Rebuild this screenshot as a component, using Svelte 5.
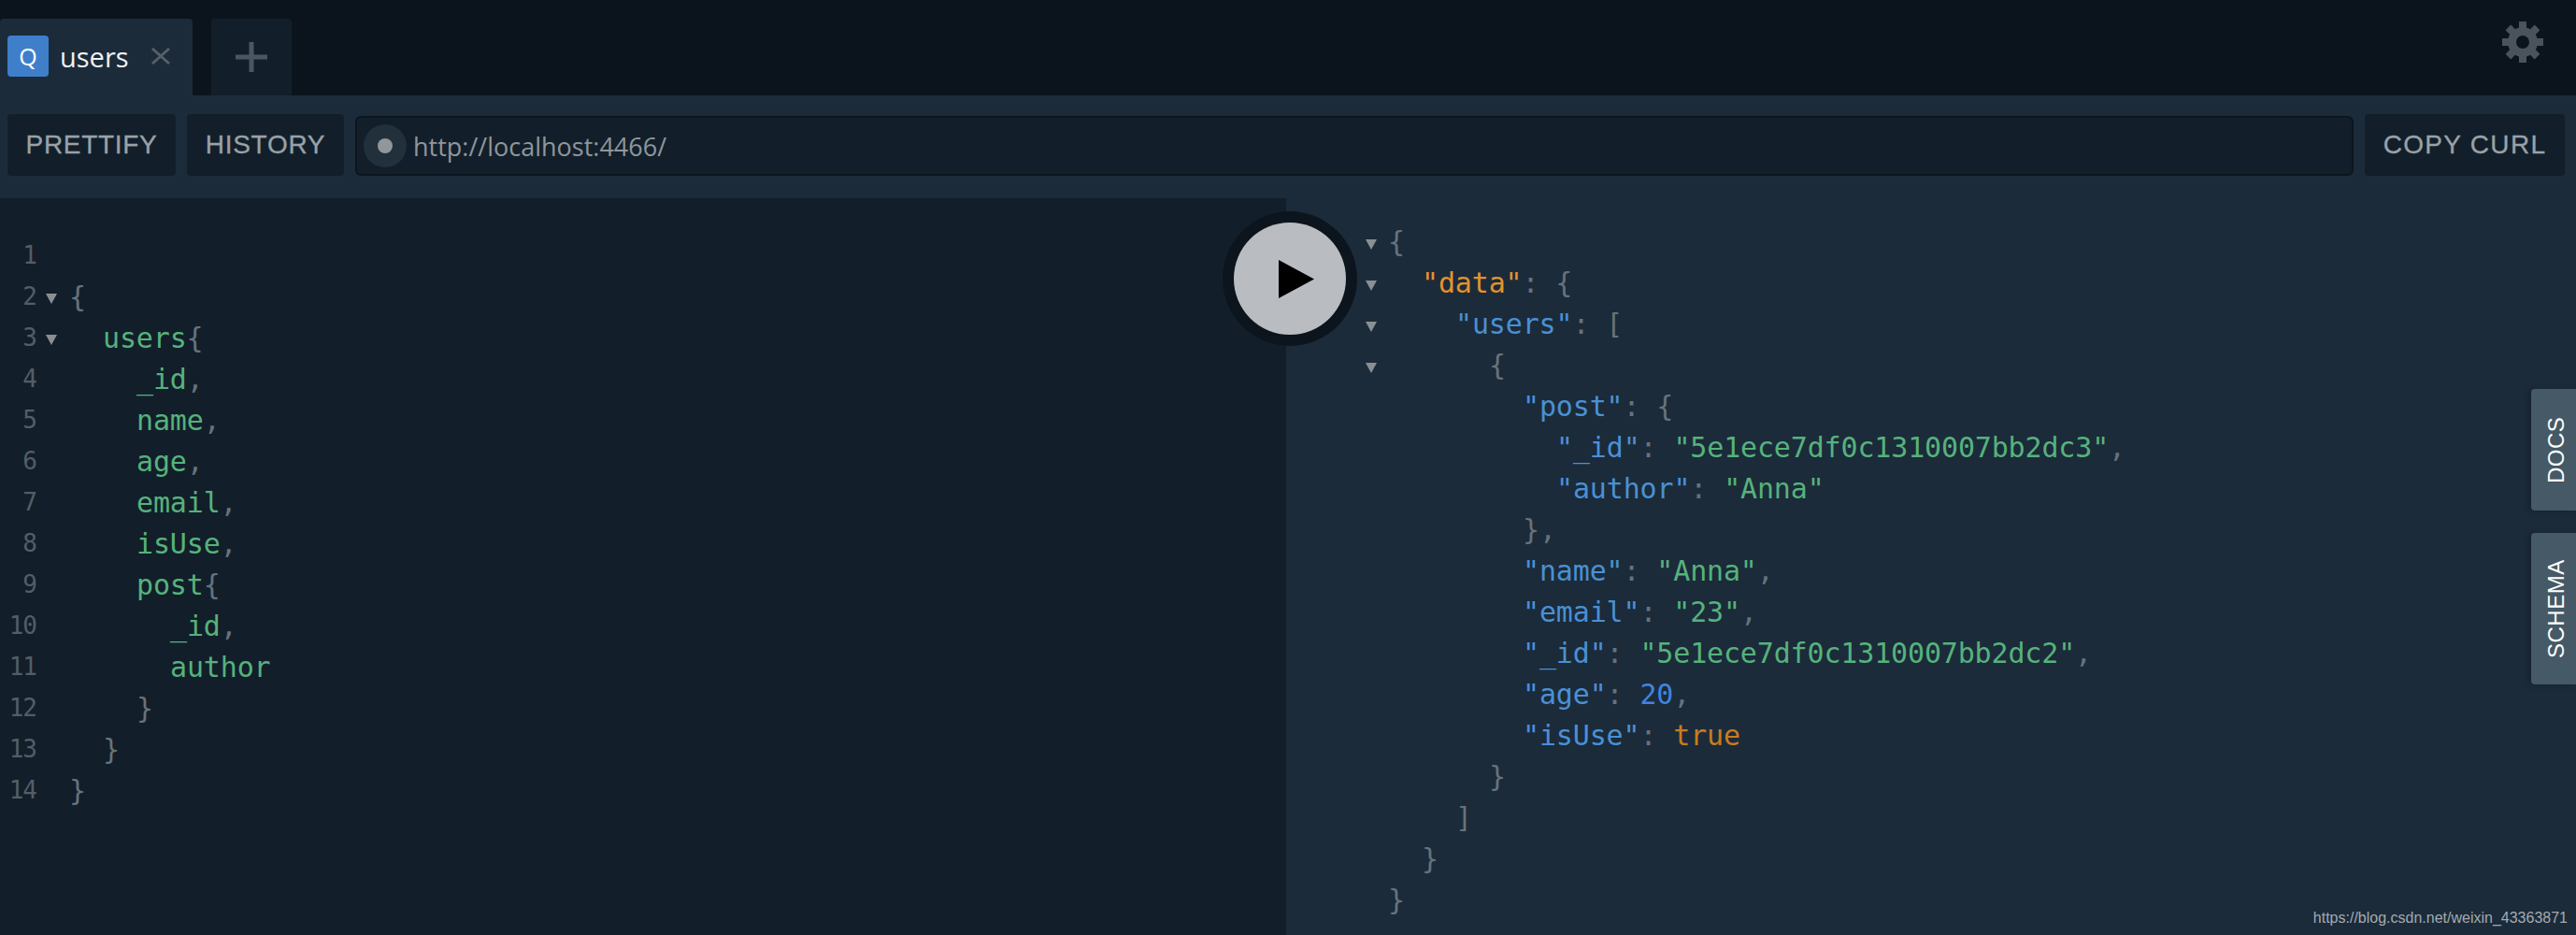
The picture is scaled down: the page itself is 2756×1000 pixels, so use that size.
<script>
  const queryLines = [
    { depth: 0, parts: [] },
    { depth: 0, fold: true, parts: [['p', '{']] },
    { depth: 1, fold: true, parts: [['k', 'users'], ['p', '{']] },
    { depth: 2, parts: [['k', '_id'], ['p', ',']] },
    { depth: 2, parts: [['k', 'name'], ['p', ',']] },
    { depth: 2, parts: [['k', 'age'], ['p', ',']] },
    { depth: 2, parts: [['k', 'email'], ['p', ',']] },
    { depth: 2, parts: [['k', 'isUse'], ['p', ',']] },
    { depth: 2, parts: [['k', 'post'], ['p', '{']] },
    { depth: 3, parts: [['k', '_id'], ['p', ',']] },
    { depth: 3, parts: [['k', 'author']] },
    { depth: 2, parts: [['p', '}']] },
    { depth: 1, parts: [['p', '}']] },
    { depth: 0, parts: [['p', '}']] }
  ];

  const resultLines = [
    { depth: 0, fold: true, parts: [['p', '{']] },
    { depth: 1, fold: true, parts: [['o', '"data"'], ['p', ': {']] },
    { depth: 2, fold: true, parts: [['b', '"users"'], ['p', ': [']] },
    { depth: 3, fold: true, parts: [['p', '{']] },
    { depth: 4, parts: [['b', '"post"'], ['p', ': {']] },
    { depth: 5, parts: [['b', '"_id"'], ['p', ': '], ['k', '"5e1ece7df0c1310007bb2dc3"'], ['p', ',']] },
    { depth: 5, parts: [['b', '"author"'], ['p', ': '], ['k', '"Anna"']] },
    { depth: 4, parts: [['p', '},']] },
    { depth: 4, parts: [['b', '"name"'], ['p', ': '], ['k', '"Anna"'], ['p', ',']] },
    { depth: 4, parts: [['b', '"email"'], ['p', ': '], ['k', '"23"'], ['p', ',']] },
    { depth: 4, parts: [['b', '"_id"'], ['p', ': '], ['k', '"5e1ece7df0c1310007bb2dc2"'], ['p', ',']] },
    { depth: 4, parts: [['b', '"age"'], ['p', ': '], ['n', '20'], ['p', ',']] },
    { depth: 4, parts: [['b', '"isUse"'], ['p', ': '], ['t', 'true']] },
    { depth: 3, parts: [['p', '}']] },
    { depth: 2, parts: [['p', ']']] },
    { depth: 1, parts: [['p', '}']] },
    { depth: 0, parts: [['p', '}']] }
  ];

  const teeth = [0, 45, 90, 135, 180, 225, 270, 315];
</script>

<div class="app">
  <div class="tabbar">
    <div class="tab">
      <span class="tab-q">Q</span>
      <span class="tab-name">users</span>
      <svg class="tab-close" width="20" height="18" viewBox="0 0 20 18">
        <path d="M1 1 L19 17 M19 1 L1 17" stroke="#555f68" stroke-width="3" fill="none" />
      </svg>
    </div>
    <div class="tab-add">
      <svg width="34" height="32" viewBox="0 0 34 32">
        <path d="M0 16 H34 M17 0 V32" stroke="#4b5760" stroke-width="5" fill="none" />
      </svg>
    </div>
    <svg class="gear" width="44" height="44" viewBox="-22 -22 44 44">
      <circle r="11.5" fill="none" stroke="#4a525b" stroke-width="9" />
      {#each teeth as a}
        <rect x="-4" y="-22" width="8" height="8" fill="#4a525b" transform="rotate({a})" />
      {/each}
    </svg>
  </div>

  <div class="toolbar">
    <button class="btn prettify">PRETTIFY</button>
    <button class="btn history">HISTORY</button>
    <div class="url">
      <span class="status"><span class="dot"></span></span>
      <span class="url-text">http://localhost:4466/</span>
    </div>
    <button class="btn copy">COPY CURL</button>
  </div>

  <div class="main">
    <div class="editor code">
      {#each queryLines as line, i}
        <div class="line">
          <span class="num">{i + 1}</span>
          <span class="fold-slot">{#if line.fold}<span class="fold"></span>{/if}</span>
          <span class="text" style="padding-left: {line.depth * 36}px">{#each line.parts as [c, t]}<span class={c}>{t}</span>{/each}</span>
        </div>
      {/each}
    </div>

    <div class="result code">
      {#each resultLines as line}
        <div class="line">
          <span class="fold-slot">{#if line.fold}<span class="fold"></span>{/if}</span>
          <span class="text" style="padding-left: {line.depth * 36}px">{#each line.parts as [c, t]}<span class={c}>{t}</span>{/each}</span>
        </div>
      {/each}
    </div>

    <div class="play">
      <div class="play-inner">
        <svg width="38" height="41" viewBox="0 0 38 41"><path d="M0 0 L38 20.5 L0 41 Z" fill="#000" /></svg>
      </div>
    </div>

    <div class="side">
      <div class="side-tab docs">DOCS</div>
      <div class="side-tab schema">SCHEMA</div>
    </div>

    <div class="mark">https://blog.csdn.net/weixin_43363871</div>
  </div>
</div>

<style>
  :global(body) {
    background: #1b2b3a;
  }

  .app {
    display: flex;
    flex-direction: column;
    height: 100vh;
    overflow: hidden;
    font-family: "Liberation Sans", Arial, sans-serif;
  }

  .tabbar {
    display: flex;
    align-items: flex-end;
    flex: 0 0 102px;
    background: #0b141c;
  }

  .tab {
    display: flex;
    align-items: center;
    width: 206px;
    height: 82px;
    padding: 0 0 2px 8px;
    box-sizing: border-box;
    background: #1b2b3a;
    border-radius: 4px 4px 0 0;
  }

  .tab-q {
    display: flex;
    align-items: center;
    justify-content: center;
    width: 44px;
    height: 44px;
    background: #3f7fca;
    border-radius: 4px;
    color: #fff;
    font-family: "Open Sans", sans-serif;
    font-size: 25px;
  }

  .tab-name {
    margin-left: 12px;
    color: #f2f3f4;
    font-family: "Open Sans", sans-serif;
    font-size: 29px;
  }

  .tab-close {
    margin-left: 24px;
  }

  .tab-add {
    display: flex;
    align-items: center;
    justify-content: center;
    width: 86px;
    height: 82px;
    margin-left: 20px;
    background: #121f2a;
    border-radius: 4px 4px 0 0;
  }

  .gear {
    align-self: flex-start;
    margin: 23px 35px 0 auto;
  }

  .toolbar {
    display: flex;
    align-items: center;
    flex: 0 0 110px;
    gap: 12px;
    padding: 0 12px 4px 8px;
    box-sizing: border-box;
    background: #1b2b3a;
  }

  .btn {
    height: 66px;
    padding: 0;
    border: none;
    border-radius: 4px;
    background: #121f2a;
    color: #9aa1a7;
    font-family: inherit;
    font-size: 28px;
    letter-spacing: 0.7px;
    -webkit-text-stroke: 0.3px #9aa1a7;
  }

  .prettify {
    width: 180px;
  }

  .history {
    width: 168px;
  }

  .copy {
    width: 214px;
    letter-spacing: 1.3px;
  }

  .url {
    display: flex;
    align-items: center;
    flex: 1;
    height: 64px;
    margin-top: 2px;
    padding-left: 7px;
    box-sizing: border-box;
    background: #121f2a;
    border: 2px solid #0c151d;
    border-radius: 6px;
  }

  .status {
    display: flex;
    align-items: center;
    justify-content: center;
    width: 46px;
    height: 46px;
    border-radius: 50%;
    background: #22303c;
  }

  .dot {
    width: 16px;
    height: 16px;
    border-radius: 50%;
    background: #8f969c;
  }

  .url-text {
    margin-left: 7px;
    color: #8f969c;
    font-family: "Open Sans", sans-serif;
    font-size: 27px;
  }

  .main {
    position: relative;
    display: flex;
    flex: 1;
    min-height: 0;
  }

  .code {
    font-family: "DejaVu Sans Mono", monospace;
    font-size: 30px;
    letter-spacing: -0.15px;
    line-height: 44px;
    white-space: pre;
  }

  .line {
    display: flex;
    height: 44px;
  }

  .editor {
    flex: 0 0 1376px;
    padding-top: 39px;
    box-sizing: border-box;
    background: #121f2a;
  }

  .editor .text {
    padding-top: 1px;
  }

  .result {
    flex: 1;
    padding: 25px 0 0 85px;
    box-sizing: border-box;
    background: #1b2b3a;
  }

  .num {
    width: 39px;
    color: #525e68;
    font-size: 26px;
    letter-spacing: -1px;
    text-align: right;
  }

  .fold-slot {
    display: flex;
    align-items: center;
    width: 35px;
    padding: 4px 0 0 10px;
    box-sizing: border-box;
  }

  .result .fold-slot {
    width: 24px;
    padding-left: 0;
  }

  .fold {
    width: 0;
    height: 0;
    border-left: 6px solid transparent;
    border-right: 6px solid transparent;
    border-top: 11px solid #8a8f93;
  }

  .p {
    color: #67727c;
  }

  .k {
    color: #56b27c;
  }

  .b {
    color: #4a90d4;
  }

  .o {
    color: #e3922f;
  }

  .n {
    color: #3f84e0;
  }

  .t {
    color: #c97b1e;
  }

  .play {
    position: absolute;
    left: 1308px;
    top: 14px;
    display: flex;
    align-items: center;
    justify-content: center;
    width: 144px;
    height: 144px;
    border-radius: 50%;
    background: #0c151d;
  }

  .play-inner {
    display: flex;
    align-items: center;
    justify-content: center;
    width: 120px;
    height: 120px;
    padding-left: 14px;
    box-sizing: border-box;
    border-radius: 50%;
    background: #b9bdc1;
  }

  .side {
    position: absolute;
    right: 0;
    top: 204px;
    display: flex;
    flex-direction: column;
    gap: 24px;
  }

  .side-tab {
    display: flex;
    align-items: center;
    justify-content: center;
    width: 48px;
    padding-right: 6px;
    box-sizing: border-box;
    writing-mode: vertical-rl;
    transform: rotate(180deg);
    border-radius: 0 4px 4px 0;
    background: #455966;
    box-shadow: 3px -1px 6px rgba(0, 0, 0, 0.2);
    color: #fff;
    font-size: 24px;
    letter-spacing: 0.5px;
  }

  .docs {
    height: 130px;
  }

  .schema {
    height: 162px;
  }

  .mark {
    position: absolute;
    right: 9px;
    bottom: 9px;
    color: #a3aab0;
    font-size: 16px;
  }
</style>
